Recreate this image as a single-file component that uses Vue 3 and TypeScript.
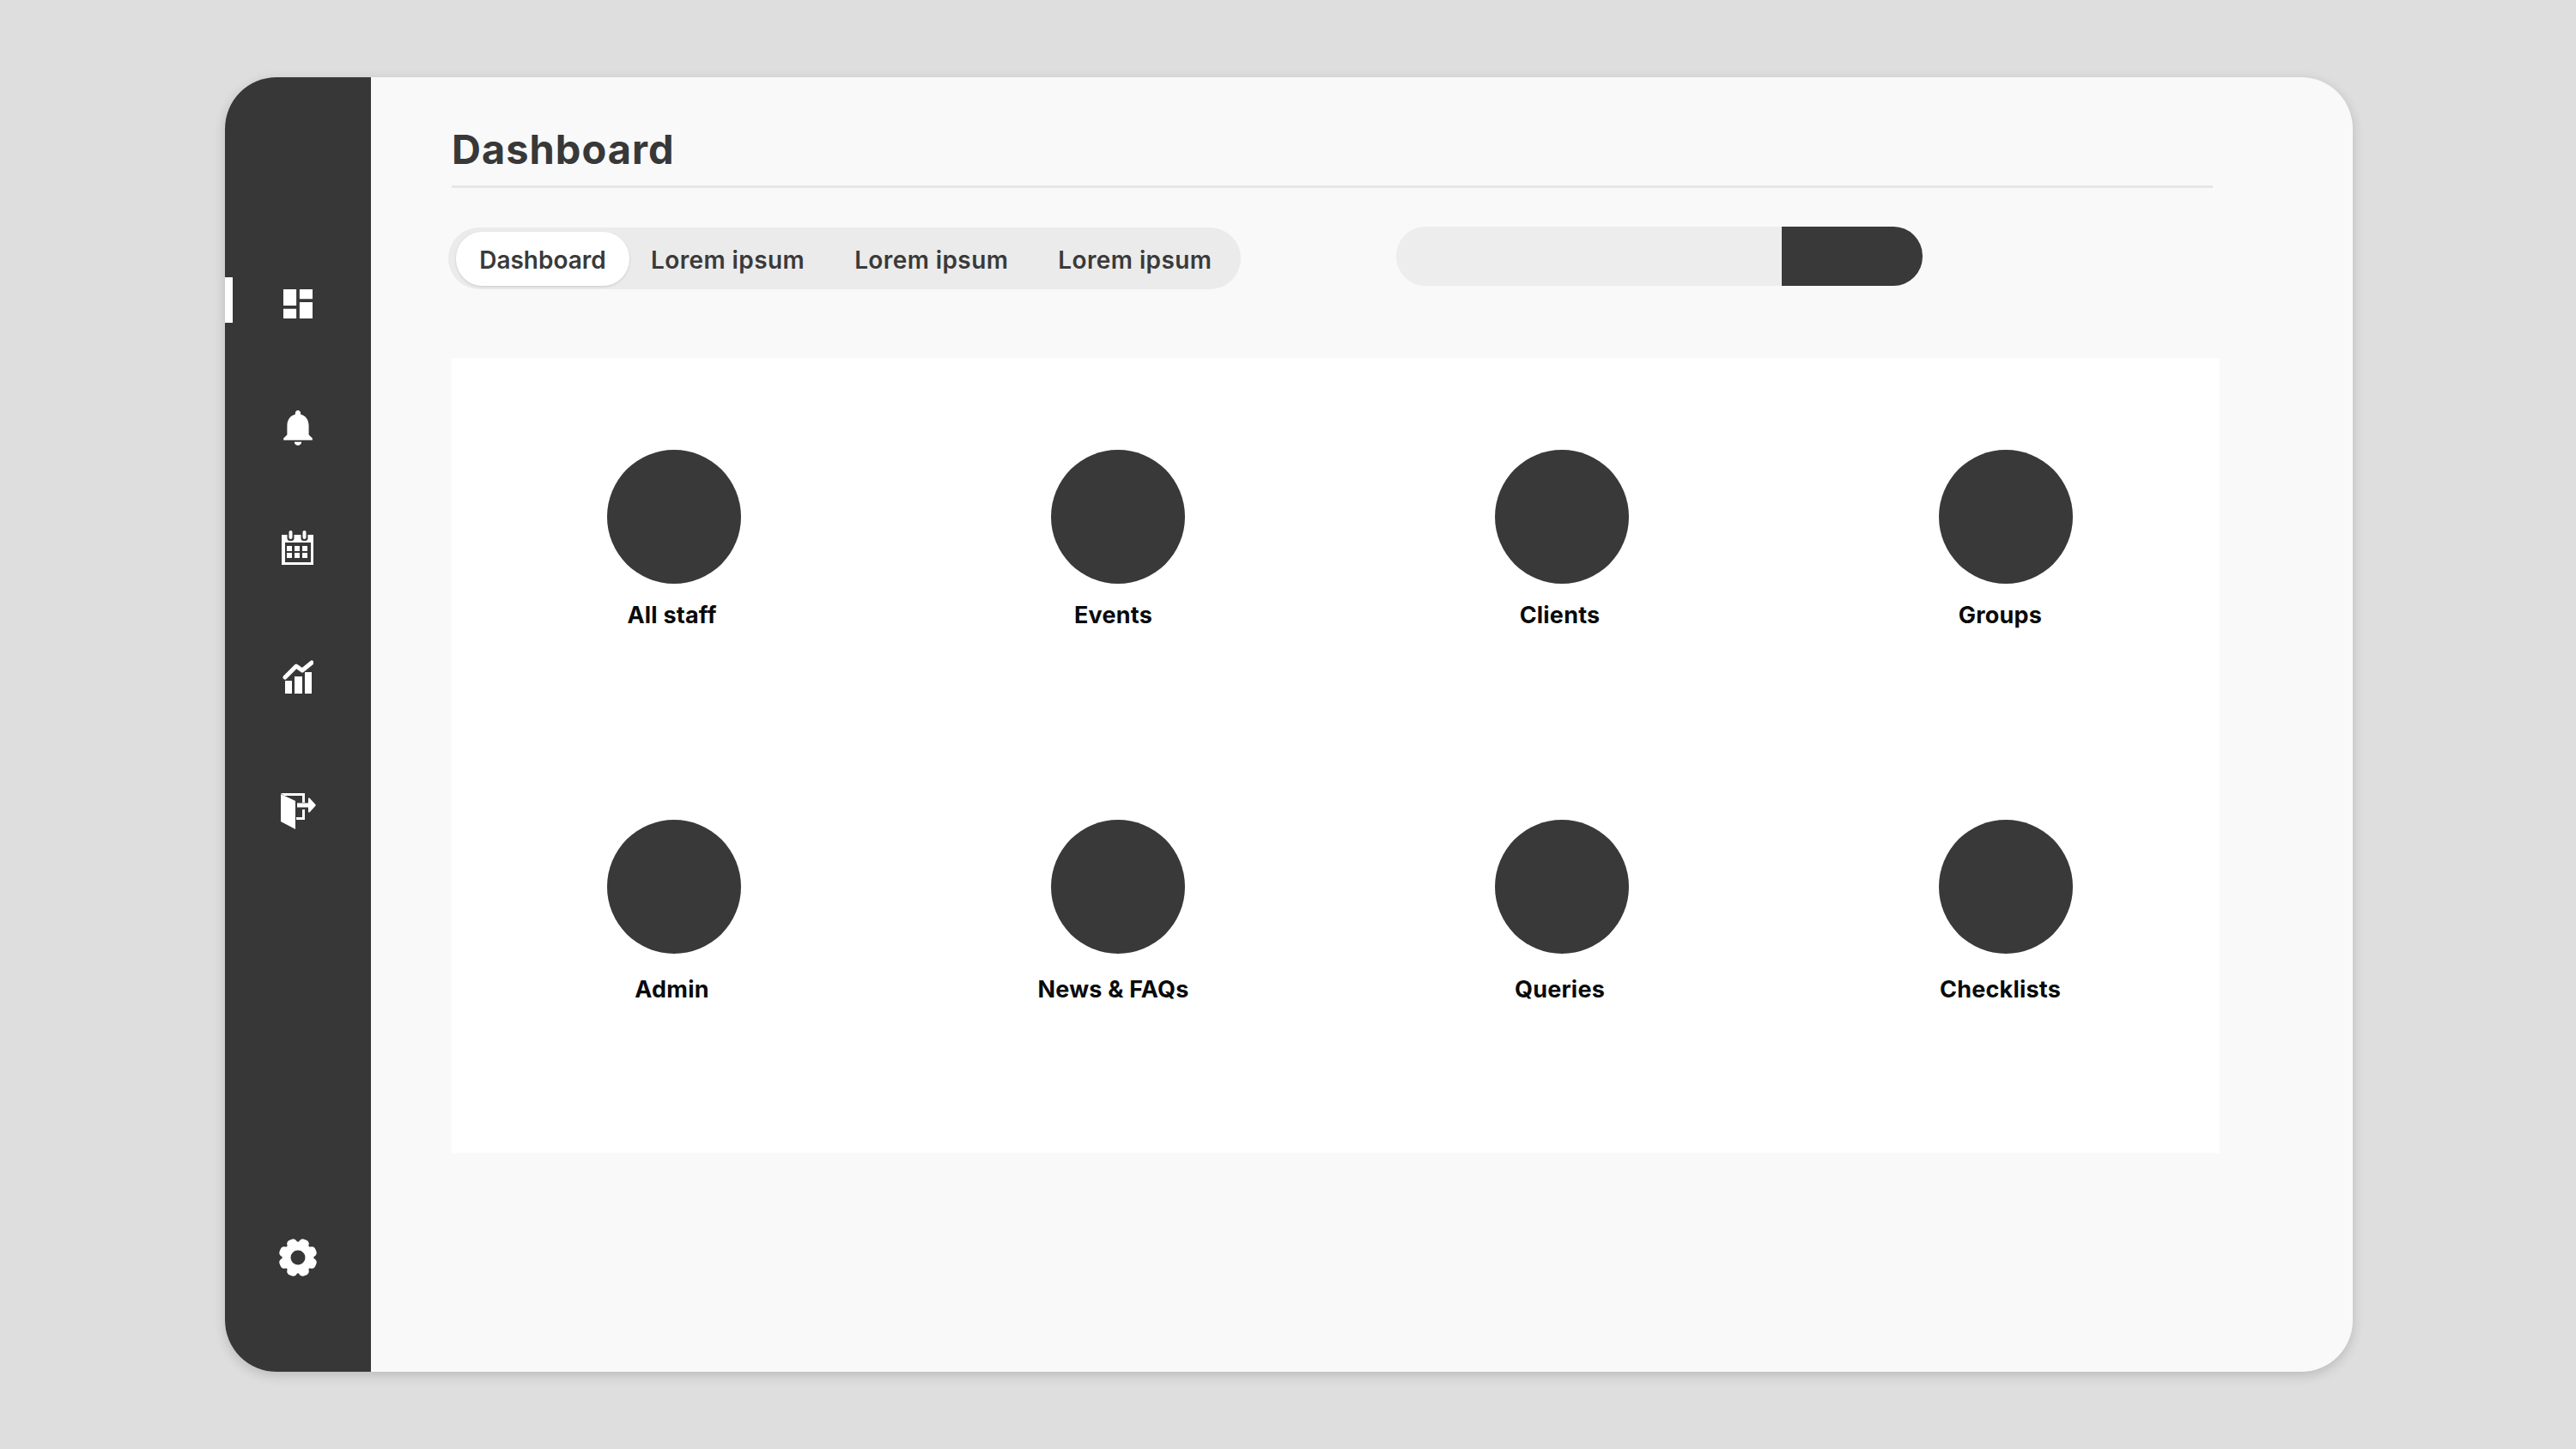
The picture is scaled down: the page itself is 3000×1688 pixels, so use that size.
<script setup lang="ts">
const tabs = ['Dashboard', 'Lorem ipsum', 'Lorem ipsum', 'Lorem ipsum']

// labels sit a little left of their circles in the reference
const columnShift = [4, 10, 4, 12]
const items = ['All staff', 'Events', 'Clients', 'Groups', 'Admin', 'News & FAQs', 'Queries', 'Checklists']

const gearTeeth = [22.5, 67.5, 112.5, 157.5, 202.5, 247.5, 292.5, 337.5]
</script>

<template>
  <div class="page">
    <div class="window">
      <aside class="sidebar">
        <div class="nav-item active">
          <svg class="icon" width="34" height="34" viewBox="3 3 18 18"><path d="M3 13h8V3H3v10zm0 8h8v-6H3v6zm10 0h8V11h-8v10zm0-18v6h8V3h-8z" /></svg>
        </div>
        <div class="nav-item bell">
          <svg class="icon" width="38" height="42" viewBox="4 2 16 20"><path d="M12 22c1.1 0 2-.9 2-2h-4c0 1.1.9 2 2 2zm6-6v-5c0-3.1-1.6-5.6-4.5-6.3V4c0-.8-.7-1.5-1.5-1.5s-1.500.7-1.500 1.500v.7C7.600 5.400 6 7.900 6 11v5l-2 2v1h16v-1l-2-2z" /></svg>
        </div>
        <div class="nav-item calendar">
          <svg class="icon" width="38" height="41" viewBox="0 0 38 41">
            <path fill-rule="evenodd" d="M0 5h37v35H0V5zm4 9v23h30V14H4z" />
            <rect class="gap" x="6.500" y="2" width="8" height="10" rx="3" />
            <rect class="gap" x="22.500" y="2" width="8" height="10" rx="3" />
            <rect x="8.500" y="0" width="4" height="10" rx="2" />
            <rect x="24.500" y="0" width="4" height="10" rx="2" />
            <path d="M6 18h6v6H6zM15 18h6v6h-6zM24 18h6v6h-6zM6 26h6v6H6zM15 26h6v6h-6zM24 26h6v6h-6z" />
          </svg>
        </div>
        <div class="nav-item chart">
          <svg class="icon" width="36" height="41" viewBox="0 0 36 41">
            <path d="M3 25h8v15H3zM14 20h9v20h-9zM26 15h8v25h-8z" />
            <path class="line" d="M3 21 16 8l7 5L34 4" />
          </svg>
        </div>
        <div class="nav-item exit">
          <svg class="icon" width="42" height="44" viewBox="0 0 42 44">
            <path d="M1 1l17 8v33L1 33z" />
            <path d="M1 0h28v11h-3V3H5zM26 19h3v12H19v-3h7z" />
            <path d="M20 11.500h13V6.500a1 1 0 0 1 1.600-.8l6.600 7.300a1.500 1.500 0 0 1 0 2l-6.600 7.300a1 1 0 0 1-1.600-.8v-5H20z" />
          </svg>
        </div>
        <div class="nav-item settings">
          <svg class="icon" width="46" height="46" viewBox="0 0 46 46">
            <circle cx="23" cy="23" r="18.500" />
            <rect v-for="deg in gearTeeth" :key="deg" x="17" y="0.500" width="12" height="14" rx="4.500" :transform="`rotate(${deg} 23 23)`" />
            <circle class="gap" cx="23" cy="23" r="8.500" />
          </svg>
        </div>
      </aside>

      <main class="content">
        <h1 class="title">Dashboard</h1>
        <div class="toolbar">
          <div class="tabs">
            <span v-for="(tab, i) in tabs" :key="i" class="tab" :class="{ selected: i === 0 }">{{ tab }}</span>
          </div>
          <div class="search">
            <div class="search-field"></div>
            <div class="search-btn"></div>
          </div>
        </div>
        <section class="card">
          <div v-for="(item, i) in items" :key="item" class="item">
            <div class="circle"></div>
            <span class="label" :style="{ marginRight: columnShift[i % 4] + 'px' }">{{ item }}</span>
          </div>
        </section>
      </main>
    </div>
  </div>
</template>

<style>
html,
body {
  margin: 0;
  background: #dedede;
}
</style>

<style scoped>
.page {
  width: 3000px;
  height: 1688px;
  padding: 90px 260px 90px 262px;
  box-sizing: border-box;
  font-family: Inter, "Open Sans", sans-serif;
  overflow: hidden;
}

.window {
  display: flex;
  height: 1508px;
  border-radius: 60px;
  overflow: hidden;
  background: #f9f9f9;
  box-shadow: 0 4px 14px rgba(0, 0, 0, 0.16);
}

.sidebar {
  width: 170px;
  flex-shrink: 0;
  background: #373737;
  display: flex;
  flex-direction: column;
  align-items: center;
  padding-top: 247px;
  padding-bottom: 110px;
  box-sizing: border-box;
}

.nav-item {
  display: flex;
  justify-content: center;
  width: 100%;
  position: relative;
}

.nav-item.active::before {
  content: "";
  position: absolute;
  left: 0;
  top: -14px;
  width: 9px;
  height: 53px;
  background: #fff;
}

.nav-item.bell {
  margin-top: 106px;
}

.nav-item.calendar {
  margin-top: 99px;
}

.nav-item.chart {
  margin-top: 109px;
}

.nav-item.exit {
  margin-top: 115px;
}

.nav-item.settings {
  margin-top: auto;
}

.icon {
  display: block;
  fill: #fff;
}

.icon .gap {
  fill: #373737;
}

.icon .line {
  fill: none;
  stroke: #fff;
  stroke-width: 5;
  stroke-linecap: round;
  stroke-linejoin: round;
}

.content {
  flex: 1;
  min-width: 0;
  padding: 0 0 0 94px;
}

.title {
  margin: 0;
  height: 129px;
  width: 2051px;
  box-sizing: border-box;
  border-bottom: 3px solid #e6e6e6;
  padding-top: 56px;
  font-size: 47px;
  line-height: 56px;
  font-weight: 700;
  letter-spacing: 1px;
  color: #383838;
}

.toolbar {
  display: flex;
  align-items: flex-start;
  margin-top: 46px;
  margin-left: -4px;
}

.tabs {
  width: 923px;
  height: 72px;
  flex-shrink: 0;
  box-sizing: border-box;
  padding: 5px 9px 4px;
  border-radius: 36px;
  background: #ebebeb;
  display: flex;
  align-items: flex-start;
  gap: 8px;
  font-size: 28px;
  font-weight: 600;
  letter-spacing: 0.4px;
  color: #3a3a3a;
}

.tab {
  height: 63px;
  flex-shrink: 0;
  box-sizing: border-box;
  padding: 3px 25px 0;
  line-height: 60px;
  white-space: nowrap;
}

.tab.selected {
  background: #fff;
  border-radius: 31px;
  width: 202px;
  margin-right: -8px;
  padding: 3px 0 0;
  text-align: center;
  letter-spacing: 0;
  box-shadow: 0 1px 3px rgba(0, 0, 0, 0.14);
}

.search {
  display: flex;
  margin-left: 181px;
  margin-top: -1px;
  height: 69px;
}

.search-field {
  width: 449px;
  background: #ededed;
  border-radius: 34px 0 0 34px;
}

.search-btn {
  width: 164px;
  background: #393939;
  border-radius: 0 34px 34px 0;
}

.card {
  width: 2059px;
  height: 926px;
  margin-top: 80px;
  background: #fff;
  display: grid;
  grid-template-columns: 517px 517px 517px 508px;
  grid-template-rows: 431px 1fr;
  padding-top: 107px;
  box-sizing: border-box;
}

.item {
  display: flex;
  flex-direction: column;
  align-items: center;
}

.item:nth-child(4n) {
  margin-right: -9px;
}

.circle {
  width: 156px;
  height: 156px;
  border-radius: 50%;
  background: #393939;
}

.label {
  margin-top: 21px;
  font-size: 27px;
  line-height: 32px;
  font-weight: 700;
  letter-spacing: 0.2px;
  color: #0a0a0a;
  white-space: nowrap;
}

.item:nth-child(n + 5) .label {
  margin-top: 26px;
}
</style>
